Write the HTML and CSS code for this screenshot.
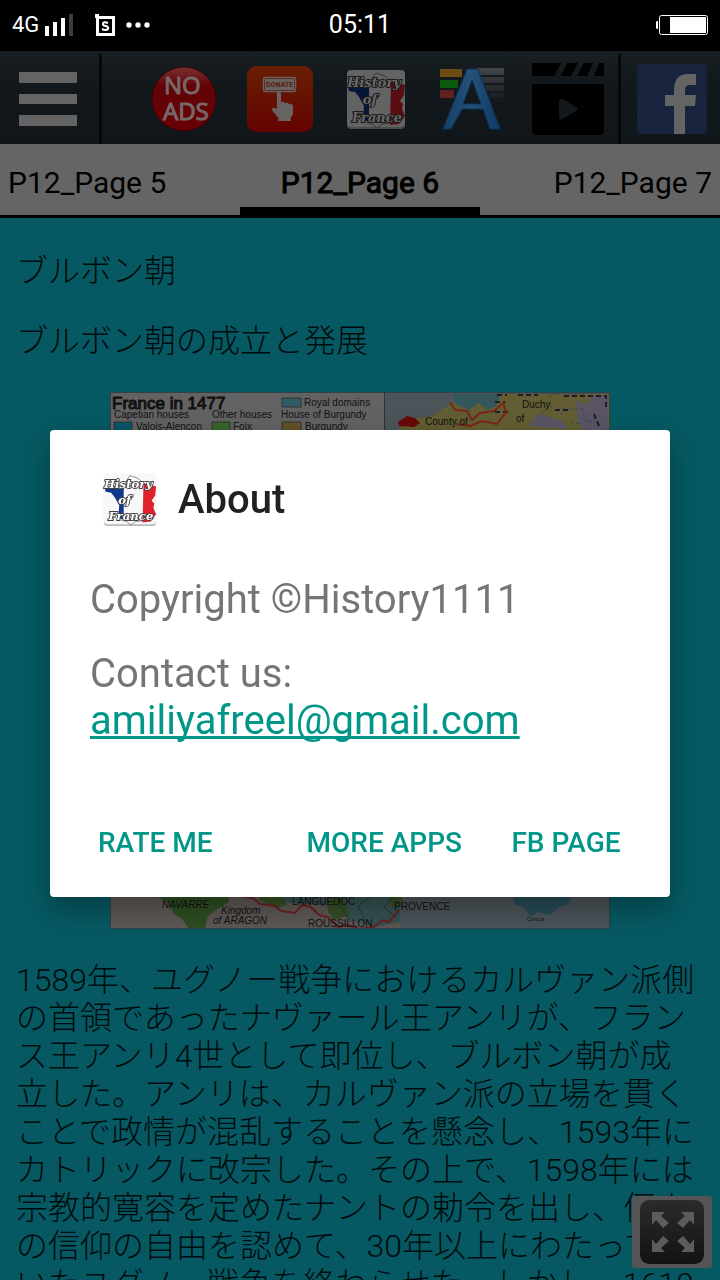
FILE: index.html
```html
<!DOCTYPE html>
<html lang="ja">
<head>
<meta charset="utf-8">
<meta name="viewport" content="width=device-width, initial-scale=1">
<title>History of France</title>
<link rel="stylesheet" href="styles.css">
</head>
<body>
<svg class="defs" width="0" height="0" aria-hidden="true">
  <defs>
    <symbol id="history" viewBox="0 0 60 60">
      <rect x="1" y="2" width="58" height="58" rx="4" fill="#bbb"/>
      <rect x="1" y="1" width="58" height="57" rx="4" fill="#f8f8f8"/>
      <path d="M2 18l10 0 1-3 6 4 4-1v35l-6-2 1-14-5-9-4-5-6-1z" fill="#12388c"/>
      <path d="M45 12l6 2 8 2-1 10-4 6 3 3-1 5 3 7-6 8-9 1z" fill="#e2202c"/>
      <path d="M20 18l10-14 9 3 6 6M18 53l8 2 5 4 5-4 9-1" fill="none" stroke="#888" stroke-width="1"/>
      <g class="history-text">
        <text x="28" y="18" text-anchor="middle">History</text>
        <text x="24" y="35" text-anchor="middle">of</text>
        <text x="31" y="53" text-anchor="middle">France</text>
      </g>
    </symbol>
    <linearGradient id="red" x2="0" y2="1"><stop offset="0" stop-color="#7a3030"/><stop offset=".3" stop-color="#620306"/><stop offset="1" stop-color="#680004"/></linearGradient>
    <linearGradient id="orange" x2="0" y2="1"><stop offset="0" stop-color="#681f04"/><stop offset="1" stop-color="#640300"/></linearGradient>
    <linearGradient id="blue" x2="1" y2="0"><stop offset="0" stop-color="#123f66"/><stop offset=".5" stop-color="#25517a"/><stop offset="1" stop-color="#0c3a66"/></linearGradient>
    <linearGradient id="dark" x2="0" y2="1"><stop offset="0" stop-color="#2b2b2b"/><stop offset="1" stop-color="#121212"/></linearGradient>
    <linearGradient id="bars" x2="0" y2="1"><stop offset="0" stop-color="#42464a"/><stop offset="1" stop-color="#15191c"/></linearGradient>
  </defs>
</svg>

<div class="screen">
  <header class="status">
    <div class="status-left">
      <span class="network">4G</span>
      <svg width="28" height="22" viewBox="0 0 28 22" aria-hidden="true"><path d="M0 12h4v10H0zM8 8h4v14H8zM16 4h4v18h-4z" fill="#fff"/><path d="M24 0h4v22h-4z" fill="#3c3c3c"/></svg>
      <svg class="app-mark" width="20" height="22" viewBox="0 0 20 22" aria-hidden="true"><path d="M0 0h4v2h16v20H1V4H0zM4 5v14h13V5z" fill="#fff" fill-rule="evenodd"/><path d="M13 9q-5-2-5 1 0 2 3 2 3 1 2 3-2 2-6 0" fill="none" stroke="#fff" stroke-width="2"/></svg>
      <svg width="24" height="6" viewBox="0 0 24 6" aria-hidden="true"><g fill="#fff"><circle cx="3" cy="3" r="2.7"/><circle cx="12" cy="3" r="2.7"/><circle cx="21" cy="3" r="2.7"/></g></svg>
    </div>
    <time class="clock">05:11</time>
    <svg class="battery" width="52" height="20" viewBox="0 0 52 20" aria-hidden="true"><path d="M0 7q0-1 2-1v8q-2 0-2-1z" fill="#fff"/><rect x="3.5" y=".5" width="48" height="19" rx="2" fill="none" stroke="#fff"/><path d="M14 2h36v16H14z" fill="#fff"/></svg>
  </header>

  <nav class="toolbar" aria-label="Toolbar">
    <button class="tool" type="button" aria-label="Menu">
      <svg width="58" height="54" viewBox="0 0 58 54"><path d="M0 0h58v11H0zM0 22h58v10H0zM0 43h58v11H0z" fill="#646464"/></svg>
    </button>
    <div class="tools">
      <button class="tool" type="button" aria-label="No ads">
        <svg width="66" height="66" viewBox="0 0 66 66"><circle cx="33" cy="33" r="32" fill="url(#red)" stroke="#330406" stroke-width="1"/><g class="ads-text"><text x="13" y="28">NO</text><text x="12" y="54">ADS</text></g></svg>
      </button>
      <button class="tool" type="button" aria-label="Donate">
        <svg width="66" height="66" viewBox="0 0 66 66"><rect width="66" height="66" rx="9" fill="url(#orange)"/><rect x="16.500" y="11.500" width="32" height="14" rx="2" fill="#5b1d10" stroke="#686260" stroke-width="1.500"/><rect x="18" y="13" width="29" height="11" fill="#686260"/><text class="donate-text" x="32.500" y="21" text-anchor="middle">DONATE</text><path d="M30 26q2-2 4 1v9q3-1 4 1 3-1 4 1 3-1 4 2v8l-3 5H32l-7-9q0-4 5-1zM31 53h13v2H31z" fill="#686260"/></svg>
      </button>
      <button class="tool" type="button" aria-label="History of France">
        <svg class="dimmed" width="60" height="60"><use href="#history"/></svg>
      </button>
      <button class="tool" type="button" aria-label="Text size">
        <svg width="64" height="64" viewBox="0 0 64 64"><path d="M0 2h22v8H0z" fill="#6b4d13"/><path d="M0 13h18v8H0z" fill="#0b5a0d"/><path d="M0 23h14v8H0z" fill="#5e2020"/><path d="M36 1h28v7H38zM41 10h23v6H43zM45 18h19v6H47zM49 26h15v5H51zM53 32h11v3H55z" fill="url(#bars)"/><path d="M27 2h11l22 60H50l-7-20H22L11 62H3zM32 13l-9 24h18z" fill="url(#blue)" stroke="#0d3455" stroke-width="1" fill-rule="evenodd"/></svg>
      </button>
      <button class="tool" type="button" aria-label="Videos">
        <svg width="72" height="72" viewBox="0 0 72 72"><path d="M0 0h29l-7 13H0zM35 0h11l-7 13H29zM52 0h9l-6 13H45zM67 0h5v13H62zM0 21h72v47q0 4-5 4H5q-5 0-5-4z" fill="#000"/><path d="M27 39q0-4 4-3l13 8q3 2 0 4l-13 8q-4 2-4-2z" fill="#12181b"/></svg>
      </button>
    </div>
    <button class="tool" type="button" aria-label="Facebook">
      <svg width="70" height="70" viewBox="0 0 70 70"><rect width="70" height="70" rx="4" fill="#18233d"/><path d="M37 70V42h-9V31h9v-5q0-16 14-16h8v11h-6q-5 0-5 5v5h11l-1 11H48v28z" fill="#646464"/></svg>
    </button>
  </nav>

  <nav class="tabs" aria-label="Pages">
    <a class="tab" href="#page5">P12_Page 5</a>
    <a class="tab tab-active" href="#page6" aria-current="page">P12_Page 6</a>
    <a class="tab" href="#page7">P12_Page 7</a>
  </nav>

  <main class="article">
    <p>ブルボン朝</p>
    <p>ブルボン朝の成立と発展</p>
    <svg class="map" viewBox="0 0 500 537" role="img" aria-label="France in 1477">
      <rect width="500" height="537" fill="#5f5d5d"/>
      <rect x="275" width="225" height="537" fill="#4b5459"/>
      <path d="M0 450h290v87H0z" fill="#5d5854"/>
      <path d="M0 0h275v60H0z" fill="#626262"/>
      <g class="map-text">
        <text class="map-title" x="2" y="17">France in 1477</text>
        <text x="4" y="26">Capetian houses</text><text x="102" y="26">Other houses</text><text x="171" y="26">House of Burgundy</text>
        <text x="26" y="38">Valois-Alençon</text><text x="123" y="38">Foix</text><text x="195" y="38">Burgundy</text><text x="194" y="14">Royal domains</text>
      </g>
      <path d="M4 30h18v10H4z" fill="#07546b" stroke="#333"/><path d="M102 30h18v10h-18z" fill="#38642a" stroke="#333"/><path d="M172 30h19v10h-19z" fill="#625128" stroke="#333"/><path d="M172 6h19v9h-19z" fill="#315c67" stroke="#333"/>
      <path d="M286 40l15-13 21-3 23-15 19-7 136 0v55H286z" fill="#625d32"/>
      <path d="M343 2h48l-5 12-9 4-8-7-10 7-14-6z" fill="#34575b"/>
      <path d="M418 34l10-12 12 3 10 3 8 9zM466 8l12 5 4-10 16 1v34h-25l-5-8z" fill="#5a5465"/>
      <path d="M440 3v10l-8 9M440 14l12 8 8-6M440 2h36M452 17h20l5 14 12-6M460 30l12 2" fill="none" stroke="#3c4a52" stroke-width="1" stroke-dasharray="4 2"/>
      <path d="M454 4h42v12M445 18h14M484 22l5 12M387 3h10M408 3h20M385 10h10M385 20h16" fill="none" stroke="#1d1d22" stroke-width="2" stroke-dasharray="5 3"/>
      <path d="M340 10l5 8 12 1 5 9 8-7 14-2 9-8 3 9-9 12-15-3-12 5-14-2" fill="none" stroke="#7b2417" stroke-width="2"/>
      <path d="M288 30l9-6 8 2 5 5-6 4-15-1z" fill="#670906"/>
      <g class="map-text"><text x="315" y="33">County of</text><text x="412" y="16">Duchy</text><text x="406" y="30">of</text></g>
      <path d="M38 500l80 0 1 10-13 8-8 6-3 13H79l-7-10-8-5-7-12z" fill="#2e4e22"/>
      <path d="M145 500h145v30l-25 5-25-7-8-6-14-8-18-2-20-1z" fill="#375052"/>
      <path d="M150 500h20l7 13-10 3-18-8zM217 506h17l6 17-16 5-6-8zM280 500h12v15h-12z" fill="#354f25"/>
      <path d="M129 504l14 2 7 6 15 2 6 5 14 2 7-8 9 2 8 8 9 2 10 10 10-2 11 4 15-2 8-7 7 2 10-12" fill="none" stroke="#6d2022" stroke-width="2"/>
      <path d="M229 500v12l12 18M260 505l-12 9 7 13M283 505l-9 10 12 10" fill="none" stroke="#20392d" stroke-width="1"/>
      <path d="M403 500h60l-4 12-10 3-9 8-13-3-6 5-8-10-8-2z" fill="#274b56"/>
      <g class="map-text"><text class="italic" x="52" y="516">NAVARRE</text><text class="italic" x="111" y="522">Kingdom</text><text class="italic" x="103" y="532">of ARAGON</text><text x="182" y="513">LANGUEDOC</text><text x="198" y="535">ROUSSILLON</text><text x="284" y="518">PROVENCE</text><text class="map-small" x="417" y="529">Corsica</text></g>
      <rect x=".5" y=".5" width="499" height="536" fill="none" stroke="#304149"/><path d="M274.500 0v60" stroke="#333"/>
    </svg>
    <p>1589年、ユグノー戦争におけるカルヴァン派側の首領であったナヴァール王アンリが、フランス王アンリ4世として即位し、ブルボン朝が成立した。アンリは、カルヴァン派の立場を貫くことで政情が混乱することを懸念し、1593年にカトリックに改宗した。その上で、1598年には宗教的寛容を定めたナントの勅令を出し、個人の信仰の自由を認めて、30年以上にわたって続いたユグノー戦争を終わらせた。しかし、1610</p>
  </main>

  <button class="expand" type="button" aria-label="Full screen">
    <svg width="64" height="64" viewBox="0 0 64 64"><rect width="64" height="64" rx="9" fill="url(#dark)"/><path id="arrow" d="M12 12h13l-4 4 8 7-6 5-7-8-4 5z" fill="#5c5c5c"/><use href="#arrow" transform="translate(66 0) scale(-1 1)"/><use href="#arrow" transform="translate(0 64) scale(1 -1)"/><use href="#arrow" transform="translate(66 64) scale(-1 -1)"/></svg>
  </button>
</div>

<div class="overlay">
  <section class="dialog" role="dialog" aria-modal="true" aria-labelledby="about-title" lang="en">
    <header class="dialog-head">
      <svg width="54" height="54" aria-hidden="true"><use href="#history"/></svg>
      <h1 id="about-title">About</h1>
    </header>
    <div class="dialog-body">
      <p>Copyright ©History1111</p>
      <p>Contact us: <a href="mailto:amiliyafreel@gmail.com">amiliyafreel@gmail.com</a></p>
    </div>
    <footer class="dialog-actions">
      <button class="action action-first" type="button">RATE ME</button>
      <button class="action" type="button">MORE APPS</button>
      <button class="action" type="button">FB PAGE</button>
    </footer>
  </section>
</div>
</body>
</html>
```
FILE: styles.css
```css
* {
  box-sizing: border-box;
}

body {
  margin: 0;
  background: #065962;
  font-family: Roboto, "Noto Sans CJK JP", sans-serif;
}

button {
  border: 0;
  padding: 0;
  background: none;
  font: inherit;
}

svg {
  display: block;
  flex: none;
}

.defs {
  position: absolute;
}

.screen {
  display: flex;
  flex-direction: column;
  height: 100vh;
  overflow: hidden;
}

/* Status bar */
.status {
  display: grid;
  grid-template-columns: 1fr auto 1fr;
  align-items: center;
  flex: none;
  height: 51px;
  padding: 0 12px 2px;
  background: #000;
  color: #fff;
}

.status-left {
  display: flex;
  align-items: center;
  gap: 6px;
}

.network {
  font-size: 22px;
}

.app-mark {
  margin: 0 5px 0 16px;
}

.clock {
  font-size: 25px;
}

.battery {
  justify-self: end;
}

/* Toolbar */
.toolbar {
  display: grid;
  grid-template-columns: 96px 1fr 96px;
  gap: 3px;
  flex: none;
  height: 93px;
  padding-top: 3px;
  background: linear-gradient(#192024, #12181b 30%, #10161a);
}

.tools {
  display: flex;
  justify-content: flex-end;
  padding-right: 2px;
  border: solid #05080a;
  border-width: 0 3px;
}

.tool {
  display: flex;
  align-items: center;
  justify-content: center;
  flex: 0 1 96px;
}

.dimmed {
  filter: brightness(0.4);
}

.ads-text {
  font: 400 24px "Open Sans", sans-serif;
  fill: #77696a;
  stroke: #77696a;
  stroke-width: 1px;
}

.donate-text {
  font: 700 7px Roboto, sans-serif;
  fill: #5b1d10;
}

.history-text {
  font: italic 700 15px "DejaVu Serif", serif;
  font-size: 13px;
  fill: #fff;
  stroke: #444;
  stroke-width: 2px;
  paint-order: stroke;
}

/* Page tabs */
.tabs {
  display: grid;
  grid-template-columns: repeat(3, 1fr);
  flex: none;
  border-bottom: 3px solid #000;
  background: #656565;
}

.tab {
  height: 71px;
  padding: 21px 8px 0;
  border-bottom: 8px solid transparent;
  color: #000;
  font-size: 30px;
  line-height: 36px;
  text-decoration: none;
  text-align: center;
  white-space: nowrap;
}

.tab:first-child {
  text-align: left;
}

.tab:last-child {
  text-align: right;
}

.tab-active {
  border-bottom-color: #000;
  -webkit-text-stroke: 1px #000;
}

/* Article */
.article {
  flex: 1;
  min-height: 0;
  overflow: hidden;
  padding: 34px 20px 0 16px;
  color: #000c0e;
  font-size: 32px;
  font-weight: 300;
  line-height: 38px;
}

.article p {
  margin: 0 0 32px;
}

.map {
  width: 500px;
  max-width: 100%;
  margin: 0 auto 32px 94px;
}

.map-text {
  font: 10px "Liberation Sans", sans-serif;
  fill: #111;
}

.map-title {
  font-size: 17px;
  stroke: #111;
  stroke-width: 1px;
}

.map-small {
  font-size: 5px;
}

.italic {
  font-style: italic;
}

.expand {
  position: fixed;
  right: 8px;
  bottom: 12px;
  padding: 4px 8px;
  border-radius: 3px;
  background: #555;
}

/* About dialog */
.overlay {
  position: fixed;
  inset: 47px 0 0;
  display: flex;
  align-items: center;
  padding: 0 50px;
}

.dialog {
  flex: 1;
  padding: 42px 40px 19px;
  border-radius: 4px;
  background: #fff;
  box-shadow: 0 12px 28px rgba(0, 0, 0, 0.3);
}

.dialog-head {
  display: flex;
  align-items: center;
  gap: 21px;
  padding-left: 13px;
  margin-bottom: 50px;
}

.dialog-head h1 {
  margin: 0;
  color: #212121;
  font-size: 40px;
  font-weight: 500;
  line-height: 47px;
}

.dialog-body {
  color: #757575;
  font-size: 40px;
  line-height: 47px;
}

.dialog-body p {
  margin: 0 0 27px;
}

.dialog-body p:last-child {
  margin-bottom: 62px;
}

.dialog-body a {
  display: block;
  width: max-content;
  color: #009688;
  text-decoration-thickness: 3px;
  text-decoration-skip-ink: none;
}

.dialog-actions {
  display: flex;
  gap: 32px;
}

.action {
  min-width: 128px;
  height: 72px;
  padding: 0 8px;
  color: #009688;
  font-size: 28px;
  font-weight: 500;
}

.action-first {
  margin-right: auto;
}
```
